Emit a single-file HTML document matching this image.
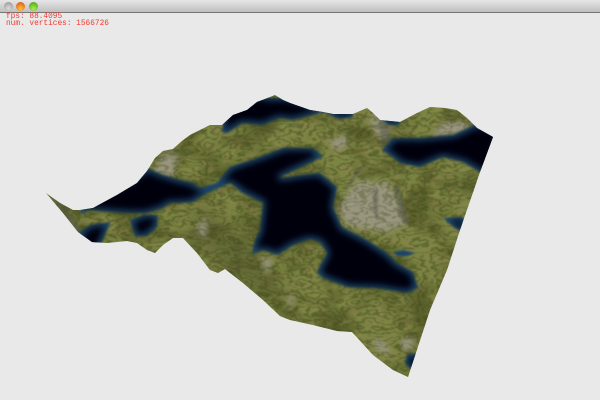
<!DOCTYPE html>
<html><head><meta charset="utf-8"><title>Terrain</title>
<style>
html,body{margin:0;padding:0;background:#e9e9e9;overflow:hidden}
#w{position:relative;width:600px;height:400px;overflow:hidden;background:#e9e9e9}
#bar{position:absolute;left:0;top:0;width:600px;height:12px;background:linear-gradient(#e6e6e6,#bfbfbf);border-bottom:1px solid #777}
.b{position:absolute;top:2px;width:9px;height:9px;border-radius:50%}
#t{position:absolute;left:6px;top:14px;font:7.8px/6.5px "Liberation Mono",monospace;color:#f23a30;white-space:pre}
svg{position:absolute;left:0;top:0;display:block;overflow:hidden}
</style></head><body><div id="w">
<svg width="600" height="400" viewBox="0 0 600 400">
<defs>
<clipPath id="land"><path d="M46 193L60 203L73 210L80 210L93 208L117 195L137 183L147 171L152 163L155 158L163 151L173 149L182 141L190 135L200 130L210 125L222 125L233 115L247 110L257 102L265 99L275 95L283 100L290 103L310 110L323 112L333 114L353 114L367 108L373 113L380 120L400 122L417 113L430 107L445 108L457 110L467 118L477 128L493 137L480 172L460 230L447 270L430 310L408 377L393 370L373 355L352 332L337 331L313 325L290 320L280 316L263 300L243 283L225 269L218 273L210 270L197 253L183 238L173 238L163 245L155 253L147 250L137 243L127 241L107 243L92 242L78 232L63 213Z"/></clipPath>
<filter id="veins" x="0" y="0" width="100%" height="100%" color-interpolation-filters="sRGB">
<feTurbulence type="fractalNoise" baseFrequency="0.04 0.075" numOctaves="4" seed="11"/>
<feColorMatrix type="matrix" values="0 0 0 0 0.24  0 0 0 0 0.27  0 0 0 0 0.09  1 0 0 0 0"/>
<feComponentTransfer><feFuncA type="table" tableValues="0 0 0 0 0 .1 .8 .1 0 .1 .8 .1 0 .1 .8 .1 0 0 0 0 0"/></feComponentTransfer>
<feGaussianBlur stdDeviation=".55"/>
</filter>
<filter id="blot" x="0" y="0" width="100%" height="100%" color-interpolation-filters="sRGB">
<feTurbulence type="fractalNoise" baseFrequency="0.025 0.04" numOctaves="3" seed="5"/>
<feColorMatrix type="matrix" values="0 0 0 0 0.25  0 0 0 0 0.27  0 0 0 0 0.10  0 3.5 0 0 -1.45"/>
</filter>
<filter id="tex2" x="0" y="0" width="100%" height="100%" color-interpolation-filters="sRGB">
<feTurbulence type="fractalNoise" baseFrequency="0.07 0.11" numOctaves="3" seed="21"/>
<feColorMatrix type="matrix" values="0 0 0 0 0.60  0 0 0 0 0.52  0 0 0 0 0.34  0 4 0 0 -1.9"/>
</filter>
<filter id="b1"><feGaussianBlur stdDeviation="1"/></filter>
<filter id="b4" x="-30%" y="-30%" width="160%" height="160%"><feGaussianBlur stdDeviation="3"/></filter>
<filter id="b8" x="-30%" y="-30%" width="160%" height="160%"><feGaussianBlur stdDeviation="8"/></filter>
<filter id="core" x="-20%" y="-20%" width="140%" height="140%"><feMorphology operator="erode" radius="2.5"/><feGaussianBlur stdDeviation="3.2"/></filter>
<g id="rock">
<path d="M338 212L348 192L360 180L375 184L388 182L400 205L406 225L385 232L350 226Z"/>
<path d="M152 172L165 153L178 155L172 178Z"/>
<path d="M330 142L345 135L348 145L335 150Z"/>
<path d="M370 118L382 114L390 135L385 142L375 132Z"/>
<path d="M432 135L445 122L465 122L475 130L450 140Z"/>
<path d="M195 228L208 217L205 240Z"/>
<path d="M288 300L294 290L290 312Z"/>
<path d="M372 340L380 352L392 355L382 340Z"/>
<path d="M400 342L412 335L412 350L404 350Z"/>
<path d="M262 255L272 262L266 275Z"/>
</g>
<g id="water">
<path d="M222 132L225 110L257 95L270 98L290 98L310 104L323 108L333 108L353 108L353 117L340 119L323 112L293 120L280 118L263 125L243 123L227 133Z"/>
<path d="M80 214L85 200L117 187L137 175L147 168L163 175L180 180L193 183L200 188L217 183L230 167L257 158L283 148L313 148L323 156L310 163L293 171L280 177L283 178L300 175L320 173L337 187L333 207L342 227L367 240L387 253L397 263L413 272L418 288L407 293L377 288L347 287L323 278L317 272L327 253L320 242L310 239L293 245L278 255L263 250L252 254L255 240L260 230L263 203L243 193L230 183L207 193L193 202L170 203L163 208L147 213L127 213L113 212L90 210Z"/>
<path d="M80 232L90 225L110 222L108 228L98 250L85 250Z"/>
<path d="M130 220L143 215L158 215L157 227L147 236L135 236Z"/>
<path d="M382 150L393 138L420 138L453 135L477 124L500 130L490 178L480 172L463 162L443 157L420 167L400 163L390 155Z"/>
<path d="M443 218L463 217L470 236L455 228Z"/>
<path d="M393 252L403 250L415 253L408 256L397 256Z"/>
<path d="M407 355L417 353L425 380L405 364Z"/>
<path d="M380 116L400 116L400 125L388 125Z"/>
</g>
</defs>
<g clip-path="url(#land)">
<rect width="600" height="400" fill="#7f8746"/>
<rect width="600" height="400" filter="url(#blot)" opacity=".55"/>
<rect width="600" height="400" filter="url(#tex2)" opacity=".3"/>
<g filter="url(#b8)" fill="#3c4020" opacity=".35">
<path d="M190 200L240 230L290 300L250 290L200 250Z"/>
<path d="M60 200L90 225L75 230Z"/>
</g>
<use href="#rock" filter="url(#b4)" fill="#9a9780"/>
<rect width="600" height="400" filter="url(#veins)" opacity=".75"/>
<use href="#rock" filter="url(#b4)" fill="#a09c84" opacity=".3"/>
<g filter="url(#b1)" fill="#55564c" opacity=".5">
<path d="M377 112L384 112L392 142L382 145Z"/>
<path d="M393 186L399 186L410 225L402 222Z"/>
<path d="M374 188L378 190L378 222L373 210Z"/>
<path d="M46 193L60 200L90 240L78 232Z"/>
<path d="M358 168L365 165L350 185L345 188Z"/>
</g>
<use href="#water" fill="#1a4468" filter="url(#b1)"/>
<use href="#water" fill="#00030a" filter="url(#core)"/>
</g>
</svg>
<div id="bar">
<div class="b" style="left:4px;background:radial-gradient(circle at 50% 70%,#dcdcdc,#8e8e8e)"></div>
<div class="b" style="left:16px;background:radial-gradient(circle at 50% 75%,#ffc040,#d84a10)"></div>
<div class="b" style="left:29px;background:radial-gradient(circle at 50% 75%,#a8ee50,#3e9a10)"></div>
</div>
<div id="t">fps: 88.4095
num. vertices: 1566726</div>
</div></body></html>
